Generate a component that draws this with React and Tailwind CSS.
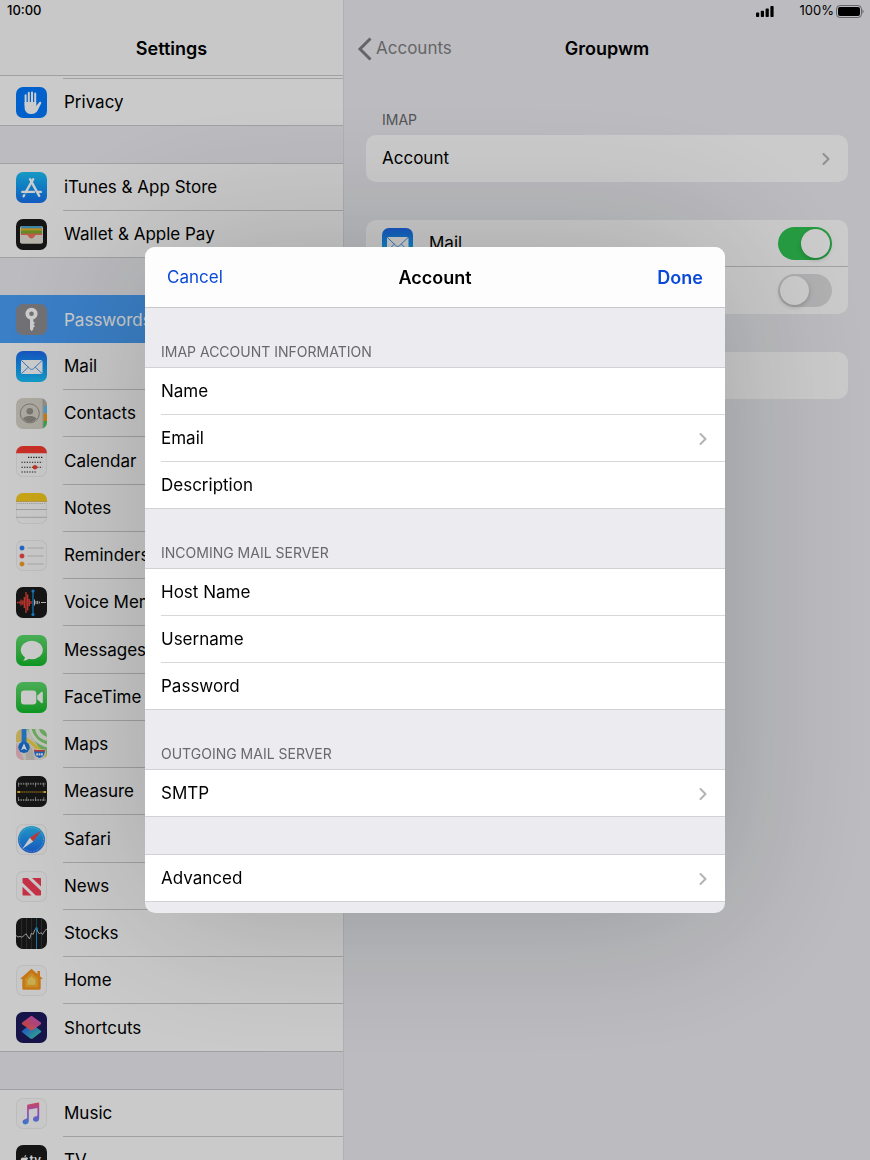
import { useState } from 'react';
import { ChevronRight } from 'lucide-react';

const Tile = ({ bg, children }) => (
  <svg viewBox="0 0 31 31" className={`size-[31px] shrink-0 rounded-[7px] ${bg}`} aria-hidden="true">
    {children}
  </svg>
);

const LIGHT = 'bg-[#fbfbfb] ring-1 ring-inset ring-[#ececec]';
const DARK = 'bg-[#1b1b1b]';

const PrivacyIcon = () => (
  <Tile bg="bg-[#007aff]">
    <g fill="none" stroke="#fff" strokeWidth="2" strokeLinecap="round">
      <path d="M9.6 8.2V18M12.8 5.8V18M16 5.4V18M19.2 6.6V18" />
    </g>
    <path d="M8.6 15h11.6v4l3-3.8c.8-.9 2.6-.5 2 1l-3.2 6.6c-1.4 3-3.6 4.2-6.6 4.2-4.6 0-6.8-3-6.8-6.8z" fill="#fff" />
  </Tile>
);

const AppStoreIcon = () => (
  <Tile bg="bg-gradient-to-b from-[#1fc0f5] to-[#1a70f0]">
    <g stroke="#fff" strokeWidth="2.4" strokeLinecap="round" fill="none">
      <path d="M17.2 7.2 9.6 20.3" />
      <path d="M14 7.2 23.2 23.8" />
      <path d="M6.3 19.9h11.6M22.2 19.9h2.6" />
      <path d="M8.2 23.2l-.6 1" />
    </g>
  </Tile>
);

const WalletIcon = () => (
  <Tile bg={DARK}>
    <rect x="4" y="7" width="23" height="17.5" rx="2" fill="#d9d6cc" />
    <path d="M5 9a2 2 0 0 1 2-2h17a2 2 0 0 1 2 2v1H5z" fill="#4aa7d8" />
    <path d="M5 9.2h21v3H5z" fill="#e3b02c" />
    <path d="M5 11.400h21V15H5z" fill="#7cae2c" />
    <path d="M5 14.6h21v2H5z" fill="#f0705a" />
    <path d="M4 16h23v6.500a2 2 0 0 1-2 2H6a2 2 0 0 1-2-2z" fill="#e3e0d6" />
    <path d="M11 16h9c-1 .2-1.200.9-1.800 1.800-.6 1-1.400 1.600-2.700 1.600s-2.100-.6-2.700-1.600c-.6-.9-.8-1.600-1.800-1.800z" fill="#f0705a" />
  </Tile>
);

const PasswordsIcon = () => (
  <Tile bg="bg-[#8e8e93]">
    <circle cx="15.5" cy="9.8" r="4.2" fill="none" stroke="#fff" strokeWidth="3.8" />
    <path d="M14 15h3.3v2.4l1.7 1.5-1.7 1.6 1.7 1.6-1.7 1.6v1.6l-1.6 1.9-1.700-1.900z" fill="#fff" />
  </Tile>
);

const MailIcon = () => (
  <Tile bg="bg-gradient-to-b from-[#1f6af0] to-[#1cc2fa]">
    <rect x="5" y="9" width="21.5" height="14" rx="1.5" fill="#fff" />
    <g fill="none" stroke="#3f96ee" strokeWidth="1">
      <path d="M5.5 9.6l8.3 8c1.2 1.1 2.6 1.1 3.8 0l8.4-8" />
      <path d="M5.6 22.5l6.7-6.3M26 22.5l-6.7-6.3" />
    </g>
  </Tile>
);

const ContactsIcon = () => (
  <Tile bg="bg-[#d6d3c8]">
    <path d="M27 0h4v8h-4z" fill="#b5b2a8" />
    <path d="M27.5 8H31v7.5h-3.500z" fill="#62bdf0" />
    <path d="M27.5 15.5H31V23h-3.500z" fill="#f59a1c" />
    <path d="M27.5 23H31v8h-4z" fill="#43c95a" />
    <path d="M27 0v31" stroke="#aaa79d" strokeWidth=".8" />
    <circle cx="13.8" cy="15.4" r="9.5" fill="none" stroke="#96938a" strokeWidth="1" />
    <circle cx="13.8" cy="13.2" r="3.3" fill="#96938a" />
    <path d="M7 20.2c2-1.7 4.5-2.2 6.8-2.2s4.800.5 6.800 2.200c-1.600 2.600-4 4-6.800 4s-5.200-1.400-6.800-4z" fill="#96938a" />
  </Tile>
);

const CalendarIcon = () => (
  <Tile bg={LIGHT}>
    <path d="M0 0h31v7.200H0z" fill="#fb3b30" />
    <g stroke="#222" strokeWidth="1.1" strokeDasharray="1.3 1.3">
      <path d="M12 11.4h14.500M5.500 16.300h21M5.500 21.200h21M5.500 26h14.500" />
    </g>
    <circle cx="19" cy="21.2" r="2.2" fill="#fb3b30" />
  </Tile>
);

const NotesIcon = () => (
  <Tile bg={LIGHT}>
    <path d="M0 0h31v8.5H0z" fill="#f9cd1d" />
    <path d="M0 8.500h31" stroke="#c9a93a" strokeWidth=".6" />
    <path d="M1.500 10.500h28" stroke="#b5b5b5" strokeWidth=".9" strokeDasharray=".9 1" />
    <path d="M0 16.500h31M0 24.300h31" stroke="#c2c2c2" strokeWidth=".9" />
  </Tile>
);

const RemindersIcon = () => (
  <Tile bg={LIGHT}>
    {[['#2a7ff5', 8], ['#f24a4a', 16], ['#f5a02a', 24]].map(([color, y]) => (
      <g key={color}>
        <circle cx="6" cy={y} r="2.3" fill={color} stroke={color} strokeOpacity=".35" strokeWidth="1" />
        <path d={`M11.5 ${y}H27.5`} stroke="#c9c9c9" strokeWidth=".9" />
      </g>
    ))}
  </Tile>
);

const VoiceMemosIcon = () => (
  <Tile bg={DARK}>
    <path
      d="M1 15.500h1.500M3.500 14.500v2M5 12.500v6M6.700 13.500v4M8.300 10v11M10 5v21M11.700 7.500v16M13.300 12v7M15 14v3"
      stroke="#f3453a" strokeWidth="1.3" fill="none"
    />
    <path d="M18.500 12.500v6M20 14v3M21.700 13.800v3.400M23.400 14.500v2M25 15.500h5" stroke="#dcdcdc" strokeWidth="1" fill="none" />
    <path d="M17 4v23.500" stroke="#1e9af0" strokeWidth="1.2" />
    <circle cx="17" cy="4" r="1.6" fill="#1e9af0" />
    <circle cx="17" cy="27.5" r="1.6" fill="#1e9af0" />
  </Tile>
);

const MessagesIcon = () => (
  <Tile bg="bg-gradient-to-b from-[#5ddc6d] to-[#0bbd29]">
    <ellipse cx="15.8" cy="15" rx="11" ry="9.2" fill="#fff" />
    <path d="M9 21.500c0 1.900-.7 3.200-2 4.200 2.600.1 4.800-.9 6-2.500z" fill="#fff" />
  </Tile>
);

const FaceTimeIcon = () => (
  <Tile bg="bg-gradient-to-b from-[#5ddc6d] to-[#0bbd29]">
    <rect x="5" y="8.5" width="15.3" height="14" rx="3.2" fill="#fff" />
    <path d="M21.200 13.800l4-3.700c.7-.6 1.600-.3 1.600.6v9.600c0 .9-.9 1.200-1.600.6l-4-3.700z" fill="#fff" />
  </Tile>
);

const MapsIcon = () => (
  <Tile bg="bg-[#e9e6de]">
    <path d="M0 14l8 17H0z" fill="#f5c0cc" />
    <path d="M0 0h5v13H0z" fill="#f3d36a" />
    <path d="M11 0h20v31z" fill="#84d475" />
    <path d="M14 0c2 8 7 14 17 17" fill="none" stroke="#f4f4ee" strokeWidth="3" />
    <path d="M21 0c1 5 4 8 10 10" fill="none" stroke="#f4f4ee" strokeWidth="4" />
    <path d="M10 10c6 3 10 9 21 17" fill="none" stroke="#f8d548" strokeWidth="3.500" />
    <path d="M10 14v17h9l-3-12z" fill="#d6d2c9" />
    <path d="M5.500 0h5v16h-5z" fill="#2c8bea" />
    <circle cx="8" cy="18.3" r="5.7" fill="#1a76e0" />
    <path d="M8 14.300l3 7-3-1.500-3 1.500z" fill="#fff" />
    <path d="M18 20.500c3 .8 8 .8 11 0 1 5-1 7.600-5.500 9-4.500-1.400-6.500-4-5.500-9z" fill="#2c7be0" stroke="#fff" strokeWidth=".9" />
    <path d="M18 20.500c3 .8 8 .8 11 0v2H18z" fill="#e8473c" />
    <path d="M20.200 25.300h6.800" stroke="#fff" strokeWidth="2.2" strokeDasharray="1.800 .6" />
  </Tile>
);

const MeasureIcon = () => (
  <Tile bg={DARK}>
    <path d="M2 7.800h27.500" stroke="#bdbdbd" strokeWidth="2" strokeDasharray=".7 1" />
    <path d="M2 8.800h27.500" stroke="#bdbdbd" strokeWidth="4" strokeDasharray=".7 7.800" />
    <path d="M1.500 16h28.500" stroke="#f6c622" strokeWidth="1.2" strokeDasharray="1.200 .8" />
    <path d="M1.500 16h2.500M27.500 16h2.500" stroke="#f6c622" strokeWidth="1.800" />
    <path d="M2 24h27.500" stroke="#bdbdbd" strokeWidth="2" strokeDasharray=".7 1" />
    <path d="M2 23h27.500" stroke="#bdbdbd" strokeWidth="4" strokeDasharray=".7 7.800" />
  </Tile>
);

const SafariIcon = () => (
  <Tile bg={LIGHT}>
    <defs>
      <linearGradient id="safari" x1="0" y1="0" x2="0" y2="1">
        <stop offset="0" stopColor="#28c0f8" />
        <stop offset="1" stopColor="#1d6cf0" />
      </linearGradient>
    </defs>
    <circle cx="15.5" cy="15.5" r="13.5" fill="url(#safari)" />
    <circle cx="15.5" cy="15.5" r="11.9" fill="none" stroke="#fff" strokeOpacity=".5" strokeWidth="1.2" strokeDasharray=".5 1" />
    <path d="M24.800 6.800l-7.600 10.600-3.400-3.700z" fill="#f5453a" />
    <path d="M6.200 25l7.600-11.300 3.400 3.700z" fill="#fff" />
  </Tile>
);

const NewsIcon = () => (
  <Tile bg={LIGHT}>
    <path d="M16 7h8c.7 0 1 .3 1 1v7.500z" fill="#f73d57" />
    <path d="M6.500 8c0-.7.3-1 1-1h4.200L25 19.800v3.700c0 .7-.3 1-1 1h-4.200L6.500 11.700z" fill="#f73d57" />
    <path d="M6.500 15.800l9 8.700h-8c-.7 0-1-.3-1-1z" fill="#f73d57" />
  </Tile>
);

const StocksIcon = () => (
  <Tile bg={DARK}>
    <path d="M5.500 0v31M10.500 0v31M15.500 0v31M25.500 0v31" stroke="#3c3c3c" strokeWidth=".8" />
    <path d="M20.500 9v22" stroke="#1a94d8" strokeWidth="1" />
    <path d="M20.500 0v9" stroke="#17577a" strokeWidth="1" />
    <path
      d="M0 17.500l2 1.500 2-.5 2 .7 2.500-2 1.500-1.500 1.500 2.300L13.500 21l2-6 1.500 1.500 2-5 1.500-.7 1.500 3.200 1.500 2 1.500-1.500 1.500 2 2.500-4L31 11"
      stroke="#d0d0d0" strokeWidth=".9" fill="none"
    />
    <circle cx="20.5" cy="10.8" r="1.5" fill="#1a94d8" />
  </Tile>
);

const HomeIcon = () => (
  <Tile bg={LIGHT}>
    <path d="M15.500 3.800L4 14h2.300v9.300c0 .9.600 1.500 1.500 1.500h15.400c.9 0 1.500-.6 1.500-1.500V14H27l-3-2.700V6h-2.600v3z" fill="#f7941d" />
    <path d="M15.500 7.800l-6.700 6v8.500h13.400v-8.500z" fill="#fbb02d" />
    <path d="M15.500 11.200l-4 3.600v5h8v-5z" fill="#fcd867" />
  </Tile>
);

const ShortcutsIcon = () => (
  <Tile bg="bg-[#1c1a5c]">
    <defs>
      <linearGradient id="scBottom" x1="0" y1="0" x2="1" y2="1">
        <stop offset=".2" stopColor="#2b6ff0" />
        <stop offset="1" stopColor="#3fe0a0" />
      </linearGradient>
      <linearGradient id="scTop" x1="1" y1="0" x2="0" y2="1">
        <stop offset="0" stopColor="#d85df0" />
        <stop offset=".7" stopColor="#ff5a5e" />
      </linearGradient>
    </defs>
    <path d="M14.300 12.600c.7-.5 1.700-.5 2.400 0l7.800 5.800c.9.700.9 1.500 0 2.200l-7.800 5.800c-.7.500-1.700.5-2.400 0l-7.800-5.800c-.9-.7-.9-1.500 0-2.200z" fill="url(#scBottom)" />
    <path d="M14.300 4.400c.7-.5 1.700-.5 2.400 0l7.800 5.800c.9.700.9 1.500 0 2.200l-7.800 5.800c-.7.500-1.700.5-2.400 0l-7.800-5.800c-.9-.7-.9-1.500 0-2.200z" fill="url(#scTop)" fillOpacity=".9" />
  </Tile>
);

const MusicIcon = () => (
  <Tile bg={LIGHT}>
    <defs>
      <linearGradient id="music" x1="0" y1="0" x2="0" y2="1">
        <stop offset="0" stopColor="#fb5c74" />
        <stop offset=".5" stopColor="#b25cf0" />
        <stop offset="1" stopColor="#3f9bf8" />
      </linearGradient>
    </defs>
    <path
      d="M12.200 6.600l10-2c.6-.1 1 .2 1 .8v14.800c0 2.300-1.500 3.600-3.300 3.600-1.700 0-2.900-1-2.900-2.500 0-1.700 1.300-2.700 3-3 1.100-.2 1.400-.5 1.400-1.400v-7l-8.600 1.700v11.200c0 2.300-1.500 3.600-3.300 3.600-1.700 0-2.900-1-2.900-2.500 0-1.700 1.200-2.600 2.900-3 1.200-.2 1.600-.6 1.600-1.500V7.700c0-.7.400-1 1.100-1.100z"
      fill="url(#music)"
    />
  </Tile>
);

const TvIcon = () => (
  <Tile bg={DARK}>
    <path d="M8.300 12.800c.9 0 1.500-.5 2.100-.5.500 0 1.300.3 1.800.9-1.500.9-1.300 3.300.3 4-.5 1.300-1.300 2.400-2.200 2.400-.6 0-.9-.4-1.700-.4s-1.100.4-1.700.4c-2.300-.3-3.700-7 .1-7.200.5 0 .9.400 1.300.4z" fill="#fff" />
    <path d="M8.300 12.200c0-1.200.8-2.100 1.900-2.300.1 1.200-.8 2.200-1.900 2.300z" fill="#fff" />
    <text x="13.5" y="18.5" fill="#fff" fontSize="12" fontWeight="600" fontFamily="Inter, sans-serif">tv</text>
  </Tile>
);

const menuGroups = [
  [{ label: 'Privacy', Icon: PrivacyIcon }],
  [
    { label: 'iTunes & App Store', Icon: AppStoreIcon },
    { label: 'Wallet & Apple Pay', Icon: WalletIcon },
  ],
  [
    { label: 'Passwords & Accounts', Icon: PasswordsIcon, selected: true },
    { label: 'Mail', Icon: MailIcon },
    { label: 'Contacts', Icon: ContactsIcon },
    { label: 'Calendar', Icon: CalendarIcon },
    { label: 'Notes', Icon: NotesIcon },
    { label: 'Reminders', Icon: RemindersIcon },
    { label: 'Voice Memos', Icon: VoiceMemosIcon },
    { label: 'Messages', Icon: MessagesIcon },
    { label: 'FaceTime', Icon: FaceTimeIcon },
    { label: 'Maps', Icon: MapsIcon },
    { label: 'Measure', Icon: MeasureIcon },
    { label: 'Safari', Icon: SafariIcon },
    { label: 'News', Icon: NewsIcon },
    { label: 'Stocks', Icon: StocksIcon },
    { label: 'Home', Icon: HomeIcon },
    { label: 'Shortcuts', Icon: ShortcutsIcon },
  ],
  [
    { label: 'Music', Icon: MusicIcon },
    { label: 'TV', Icon: TvIcon },
  ],
];

const MenuRow = ({ label, Icon, selected }) => (
  <li className="group h-[47px] nth-[4n]:h-12">
    <a
      href="#"
      className={`flex h-full items-center gap-4 pl-4 group-last:border-b group-last:border-[#cacacd] ${selected ? 'bg-[#4a9ff9] text-white' : ''}`}
    >
      <Icon />
      <span className={`flex h-full min-w-0 flex-1 items-center pt-[2px] pl-px whitespace-nowrap group-last:border-b-0 ${selected ? '' : 'border-b border-[#cacacd]'}`}>
        {label}
      </span>
    </a>
  </li>
);

const Sidebar = () => (
  <aside className="flex w-[344px] shrink-0 flex-col overflow-hidden border-r border-[#dcdce0] bg-[#ebebf0]">
    <header className="shrink-0 border-b border-[#cacacd] bg-[#fbfbfb]">
      <div className="flex h-[22px] items-center pl-[7px] text-[13px] font-medium">10:00</div>
      <h1 className="flex h-[53px] items-center justify-center text-lg font-semibold">Settings</h1>
    </header>
    <nav className="flex flex-col gap-[37px]">
      {menuGroups.map((items, i) => (
        <ul
          key={i}
          className={`bg-[#fdfdfd] ${i === 0 ? 'pt-[2px]' : 'border-t'} ${items[0].selected ? 'border-[#4a9ff9]' : 'border-[#cacacd]'}`}
        >
          {i === 0 && <li className="ml-[63px] h-px bg-[#cacacd]" />}
          {items.map((item) => (
            <MenuRow key={item.label} {...item} />
          ))}
        </ul>
      ))}
    </nav>
  </aside>
);

const Switch = ({ label, checked, onChange }) => (
  <input
    type="checkbox"
    role="switch"
    aria-label={label}
    checked={checked}
    onChange={(e) => onChange(e.target.checked)}
    className="relative h-[33px] w-[54px] shrink-0 cursor-pointer appearance-none rounded-full bg-[#dddddf] transition-colors before:absolute before:top-[2px] before:left-[2px] before:size-[29px] before:rounded-full before:bg-white before:shadow-[0_2px_5px_rgba(0,0,0,0.2)] before:transition-transform before:content-[''] checked:bg-[#30c552] checked:before:translate-x-[21px]"
  />
);

const StatusIcons = () => (
  <div className="flex h-[22px] items-center justify-end pr-[6px] text-[13px]">
    <svg viewBox="0 0 18 11" className="mr-[26px] h-[11px] w-[18px]" aria-hidden="true">
      <rect x="0" y="6.5" width="3.2" height="4.5" rx=".8" />
      <rect x="4.8" y="4.7" width="3.2" height="6.3" rx=".8" />
      <rect x="9.6" y="2.6" width="3.2" height="8.4" rx=".8" />
      <rect x="14.4" y="0" width="3.2" height="11" rx=".8" />
    </svg>
    <span>100%</span>
    <svg viewBox="0 0 28 13" className="ml-[2px] h-[13px] w-[28px]" aria-hidden="true">
      <rect x=".5" y=".5" width="25" height="12" rx="3.5" fill="none" stroke="#000" strokeOpacity=".45" />
      <rect x="2" y="2" width="22" height="9" rx="2" />
      <path d="M26.500 4.500c1.400.5 1.400 3.500 0 4z" fillOpacity=".5" />
    </svg>
  </div>
);

const Detail = () => {
  const [mail, setMail] = useState(true);
  const [notes, setNotes] = useState(false);

  return (
    <main className="min-w-0 flex-1 bg-[#ebebf0]">
      <StatusIcons />
      <header className="grid h-[53px] grid-cols-3 items-center px-[13px]">
        <button className="flex items-center gap-1 justify-self-start text-[#7f7f83]">
          <svg viewBox="0 0 15 24" className="h-6 w-[15px]" fill="none" stroke="currentColor" strokeWidth="3" aria-hidden="true">
            <path d="M13.500 1.500L3 12l10.500 10.500" />
          </svg>
          Accounts
        </button>
        <h2 className="text-center text-lg font-semibold">Groupwm</h2>
      </header>

      <div className="px-[22px] pt-9">
        <h3 className="mb-[7px] pl-4 text-[14px] leading-[17px] text-[#68686d]">IMAP</h3>
        <button className="flex h-[47px] w-full items-center justify-between rounded-[10px] bg-[#fefefe] pt-px pr-3 pl-4">
          Account
          <ChevronRight size={20} strokeWidth={2.5} className="text-[#b4b4b8]" aria-hidden="true" />
        </button>

        <ul className="mt-[38px] rounded-[10px] bg-[#fefefe] pl-4">
          <li className="flex h-[47px] items-center gap-4">
            <MailIcon />
            <div className="flex h-full flex-1 items-center justify-between border-b border-[#cacacd] pr-4">
              <span className="pt-[2px]">Mail</span>
              <Switch label="Mail" checked={mail} onChange={setMail} />
            </div>
          </li>
          <li className="flex h-[47px] items-center justify-end pr-4">
            <Switch label="Notes" checked={notes} onChange={setNotes} />
          </li>
        </ul>

        <div className="mt-[38px] h-[47px] rounded-[10px] bg-[#fefefe]" />
      </div>
    </main>
  );
};

const formSections = [
  {
    title: 'IMAP ACCOUNT INFORMATION',
    rows: [{ label: 'Name', type: 'text' }, { label: 'Email' }, { label: 'Description', type: 'text' }],
  },
  {
    title: 'INCOMING MAIL SERVER',
    rows: [
      { label: 'Host Name', type: 'text' },
      { label: 'Username', type: 'text' },
      { label: 'Password', type: 'password' },
    ],
  },
  { title: 'OUTGOING MAIL SERVER', rows: [{ label: 'SMTP' }] },
  { rows: [{ label: 'Advanced' }] },
];

const FormRow = ({ label, type }) => {
  const id = label.toLowerCase().replace(' ', '-');

  return (
    <li className="group h-[47px] pl-4 last:border-b last:border-[#d2d2d6]">
      {type ? (
        <div className="flex h-full items-center border-b border-[#d8d8db] pt-px group-last:border-b-0">
          <label htmlFor={id} className="w-[150px] shrink-0">{label}</label>
          <input id={id} type={type} className="h-full min-w-0 flex-1 bg-transparent pr-4 focus:outline-none" />
        </div>
      ) : (
        <button className="flex h-full w-full items-center justify-between border-b border-[#d8d8db] pt-px pr-3 text-left group-last:border-b-0">
          {label}
          <ChevronRight size={20} strokeWidth={2.5} className="text-[#b4b4b8]" aria-hidden="true" />
        </button>
      )}
    </li>
  );
};

const AccountModal = () => (
  <div className="fixed inset-0 flex items-center justify-center bg-black/20">
    <form
      role="dialog"
      aria-label="Account"
      onSubmit={(e) => e.preventDefault()}
      className="w-2/3 overflow-hidden rounded-[10px] bg-[#ebebf0] pb-[11px] shadow-[0_0_160px_rgba(0,20,0,0.22)]"
    >
      <header className="grid h-[61px] grid-cols-3 items-center border-b border-[#c8c8cc] bg-[#fdfdfd] px-[22px] pt-px">
        <button type="button" className="justify-self-start text-[#0a49d8]">Cancel</button>
        <h2 className="text-center text-lg font-semibold">Account</h2>
        <button type="submit" className="justify-self-end text-lg font-semibold text-[#0a49d8]">Done</button>
      </header>
      {formSections.map(({ title, rows }, i) => (
        <section key={i}>
          {title ? (
            <h3 className="flex h-[59px] items-end pb-[7px] pl-4 text-[14px] leading-[17px] text-[#68686d]">{title}</h3>
          ) : (
            <div className="h-[37px]" />
          )}
          <ul className="border-t border-[#d2d2d6] bg-white">
            {rows.map((row) => (
              <FormRow key={row.label} {...row} />
            ))}
          </ul>
        </section>
      ))}
    </form>
  </div>
);

const App = () => (
  <div className="flex h-screen overflow-hidden font-['Inter',sans-serif] text-[17px] text-black">
    <Sidebar />
    <Detail />
    <AccountModal />
  </div>
);

export default App;
